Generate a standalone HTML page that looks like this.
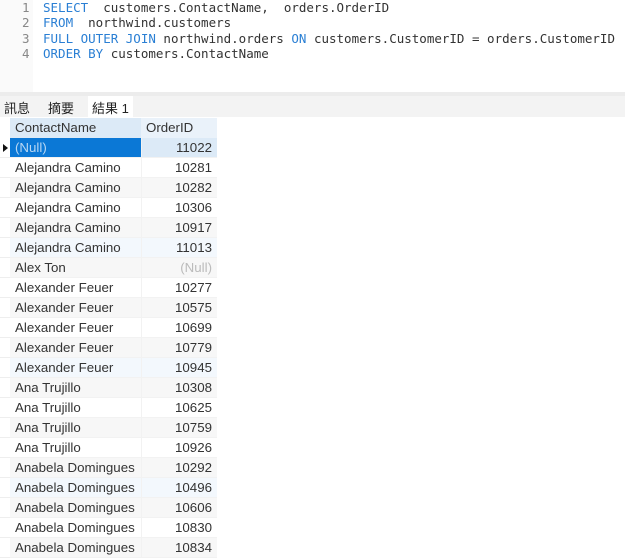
<!DOCTYPE html>
<html><head><meta charset="utf-8"><style>
*{margin:0;padding:0;box-sizing:border-box}
body{width:625px;height:557px;overflow:hidden;background:#fff;font-family:"Liberation Sans","Noto Sans CJK TC",sans-serif;position:relative}
.ed{position:absolute;left:0;top:0;width:625px;height:92px;background:#fff}
.gut{position:absolute;left:0;top:0;width:33px;height:92px;background:#fafafa}
.ln{position:absolute;left:22px;font:12.5px "DejaVu Sans Mono",monospace;color:#888}
.cd{position:absolute;left:43px;font:12.5px "DejaVu Sans Mono",monospace;color:#333;white-space:pre;letter-spacing:0}
.k{color:#2a7fd4}
.sep{position:absolute;left:0;top:92px;width:625px;height:4px;background:#ececec}
.tabs{position:absolute;left:0;top:96px;width:625px;height:21px;background:#f3f3f3;font-size:13px;color:#222}
.tabs span{position:absolute;top:2px}
.act{position:absolute;left:88px;top:0;width:45px;height:21px;background:#fff}
.grid{position:absolute;left:0;top:118px}
.row{height:20px;display:flex;font-size:13.3px;color:#333;line-height:20px}
.ind{width:10px;border-bottom:1px solid #eee;position:relative}
.c1{width:131px;padding-left:5px;border-bottom:1px solid #f2f2f2}
.c2{width:76px;text-align:right;padding-right:5px;border-bottom:1px solid #f2f2f2;border-left:1px solid #f2f2f2}
.hd .c1,.hd .c2{background:#dceaf7;border:none}
.hd .c2{background:#eaf2fa}
.hd .ind{border:none}
.g .c1,.g .c2{background:#f7f7f7}
.nl{color:#bbb}
</style></head><body>
<div class="ed"><div class="gut"></div>
<div class="ln" style="top:0">1</div><div class="ln" style="top:15px">2</div><div class="ln" style="top:31px">3</div><div class="ln" style="top:46px">4</div>
<div class="cd" style="top:0"><span class="k">SELECT</span>  customers.ContactName,  orders.OrderID</div>
<div class="cd" style="top:15px"><span class="k">FROM</span>  northwind.customers</div>
<div class="cd" style="top:31px"><span class="k">FULL OUTER JOIN</span> northwind.orders <span class="k">ON</span> customers.CustomerID = orders.CustomerID</div>
<div class="cd" style="top:46px"><span class="k">ORDER BY</span> customers.ContactName</div>
</div>
<div class="sep"></div>
<div class="tabs"><div class="act"></div><span style="left:4px">訊息</span><span style="left:48px">摘要</span><span style="left:92px">結果 1</span></div>
<div class="grid">
<div class="row hd"><div class="ind"></div><div class="c1">ContactName</div><div class="c2" style="text-align:left;padding-left:5px">OrderID</div></div>
<div class="row"><div class="ind"><div style="position:absolute;left:3px;top:6px;border-left:5px solid #111;border-top:4px solid transparent;border-bottom:4px solid transparent"></div></div><div class="c1" style="background:#0b78d6;color:#b8d7f3">(Null)</div><div class="c2" style="background:#dceaf7">11022</div></div>
<div class="row"><div class="ind"></div><div class="c1">Alejandra Camino</div><div class="c2">10281</div></div>
<div class="row g"><div class="ind"></div><div class="c1">Alejandra Camino</div><div class="c2">10282</div></div>
<div class="row"><div class="ind"></div><div class="c1">Alejandra Camino</div><div class="c2">10306</div></div>
<div class="row g"><div class="ind"></div><div class="c1">Alejandra Camino</div><div class="c2">10917</div></div>
<div class="row"><div class="ind"></div><div class="c1" style="background:#f3f8fd">Alejandra Camino</div><div class="c2" style="background:#f3f8fd">11013</div></div>
<div class="row g"><div class="ind"></div><div class="c1">Alex Ton</div><div class="c2 nl">(Null)</div></div>
<div class="row"><div class="ind"></div><div class="c1">Alexander Feuer</div><div class="c2">10277</div></div>
<div class="row g"><div class="ind"></div><div class="c1">Alexander Feuer</div><div class="c2">10575</div></div>
<div class="row"><div class="ind"></div><div class="c1">Alexander Feuer</div><div class="c2">10699</div></div>
<div class="row g"><div class="ind"></div><div class="c1">Alexander Feuer</div><div class="c2">10779</div></div>
<div class="row"><div class="ind"></div><div class="c1" style="background:#f3f8fd">Alexander Feuer</div><div class="c2" style="background:#f3f8fd">10945</div></div>
<div class="row g"><div class="ind"></div><div class="c1">Ana Trujillo</div><div class="c2">10308</div></div>
<div class="row"><div class="ind"></div><div class="c1">Ana Trujillo</div><div class="c2">10625</div></div>
<div class="row g"><div class="ind"></div><div class="c1">Ana Trujillo</div><div class="c2">10759</div></div>
<div class="row"><div class="ind"></div><div class="c1">Ana Trujillo</div><div class="c2">10926</div></div>
<div class="row g"><div class="ind"></div><div class="c1">Anabela Domingues</div><div class="c2">10292</div></div>
<div class="row"><div class="ind"></div><div class="c1" style="background:#f3f8fd">Anabela Domingues</div><div class="c2" style="background:#f3f8fd">10496</div></div>
<div class="row g"><div class="ind"></div><div class="c1">Anabela Domingues</div><div class="c2">10606</div></div>
<div class="row"><div class="ind"></div><div class="c1">Anabela Domingues</div><div class="c2">10830</div></div>
<div class="row g"><div class="ind"></div><div class="c1">Anabela Domingues</div><div class="c2">10834</div></div>
</div>
</body></html>
